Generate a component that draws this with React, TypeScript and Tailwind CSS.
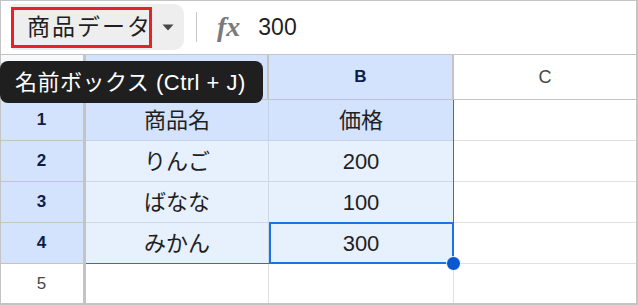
import React from "react";

const font = { fontFamily: '"Liberation Sans", Arial, "Noto Sans CJK JP", sans-serif' };

function Cell({ w, children, className = "" }: { w: string; children?: React.ReactNode; className?: string }) {
  return <div className={`${w} shrink-0 flex items-center justify-center ${className}`}>{children}</div>;
}

export default function App() {
  const rows = [
    { n: "1", a: "商品名", b: "価格", sel: true, head: true },
    { n: "2", a: "りんご", b: "200", sel: true },
    { n: "3", a: "ばなな", b: "100", sel: true },
    { n: "4", a: "みかん", b: "300", sel: true },
    { n: "5", a: "", b: "", sel: false },
  ];
  return (
    <div style={font} className="relative w-[638px] h-[305px] bg-white overflow-hidden">
      <div className="absolute inset-0 border border-r-2 border-b-2 border-[#c4c4c4] pointer-events-none z-30" />
      {/* toolbar */}
      <div className="h-[55px] border-b border-[#c4c4c4] flex items-center pl-[11px]">
        <div className="flex items-center h-[46px] w-[173px] bg-[#eeeeee] rounded-r-[10px] rounded-l-[3px]">
          <div className="relative w-[141px] h-[41px] border-[3px] border-[#e8202a] flex items-center overflow-hidden">
            <span className="whitespace-nowrap text-[23px] tracking-[2px] text-[#1f1f1f] pl-[13px]">商品データ</span>
          </div>
          <div className="flex-1 flex items-center justify-center">
            <svg width="12" height="7" viewBox="0 0 12 7"><path d="M0.5 0.5 L11.5 0.5 L6 6.5 Z" fill="#444746" /></svg>
          </div>
        </div>
        <div className="ml-[12px] w-px h-[30px] bg-[#c7c7c7]" />
        <span className="ml-[20px] text-[28px] font-bold italic text-[#7a7a7a] leading-none" style={{ fontFamily: '"Liberation Serif", "Times New Roman", serif' }}>fx</span>
        <span className="ml-[18px] text-[23px] text-[#1f1f1f]">300</span>
      </div>
      {/* column header */}
      <div className="flex h-[45px] border-b border-[#c4c4c4]">
        <Cell w="w-[86px]" className="bg-[#f8f9fa] border-r-[3px] border-[#c4c4c4]" />
        <Cell w="w-[183px]" className="bg-[#d3e3fd] border-r-2 border-[#c4c4c4]" />
        <Cell w="w-[185px]" className="bg-[#d3e3fd] border-r-2 border-[#c4c4c4] font-bold text-[17px] text-[#0b1d4a]">B</Cell>
        <Cell w="w-[182px]" className="text-[18px] text-[#444746]">C</Cell>
      </div>
      {rows.map((r) => (
        <div key={r.n} className="flex h-[41px]">
          <Cell
            w="w-[86px]"
            className={`border-r-[3px] border-b border-[#c4c4c4] text-[17px] ${r.sel ? "bg-[#d3e3fd] font-bold text-[#0b1d4a]" : "text-[#444746]"}`}
          >
            {r.n}
          </Cell>
          <Cell
            w="w-[183px]"
            className={`border-r border-b text-[22px] text-[#1f1f1f] ${r.sel ? (r.head ? "bg-[#d3e3fd] border-[#c3d2e8]" : "bg-[#e7f0fd] border-[#cfd8e4]") : "border-[#e1e1e1]"}`}
          >
            {r.a}
          </Cell>
          <Cell
            w="w-[185px]"
            className={`border-r border-b text-[22px] text-[#1f1f1f] ${r.sel ? (r.head ? "bg-[#d3e3fd] border-[#c3d2e8]" : "bg-[#e7f0fd] border-[#cfd8e4]") : "border-[#e1e1e1]"}`}
          >
            {r.b}
          </Cell>
          <Cell w="w-[182px]" className="border-b border-[#e1e1e1]" />
        </div>
      ))}
      {/* range outline */}
      <div className="absolute left-[86px] top-[100px] w-[368px] h-[164px] border-r border-b border-[#1a73e8] z-10" />
      {/* active cell */}
      <div className="absolute left-[269px] top-[222px] w-[185px] h-[42px] border-2 border-[#1a73e8] z-10" />
      <div className="absolute left-[446px] top-[256px] w-[15px] h-[15px] rounded-full bg-[#0b57d0] border border-white z-20" />
      {/* tooltip */}
      <div className="absolute left-0 top-[61px] w-[263px] h-[42px] bg-[#1f1f1f] rounded-[8px] flex items-center pl-[15px] z-40">
        <span className="text-white text-[22px] tracking-[0.5px] whitespace-nowrap">名前ボックス (Ctrl + J)</span>
      </div>
    </div>
  );
}
